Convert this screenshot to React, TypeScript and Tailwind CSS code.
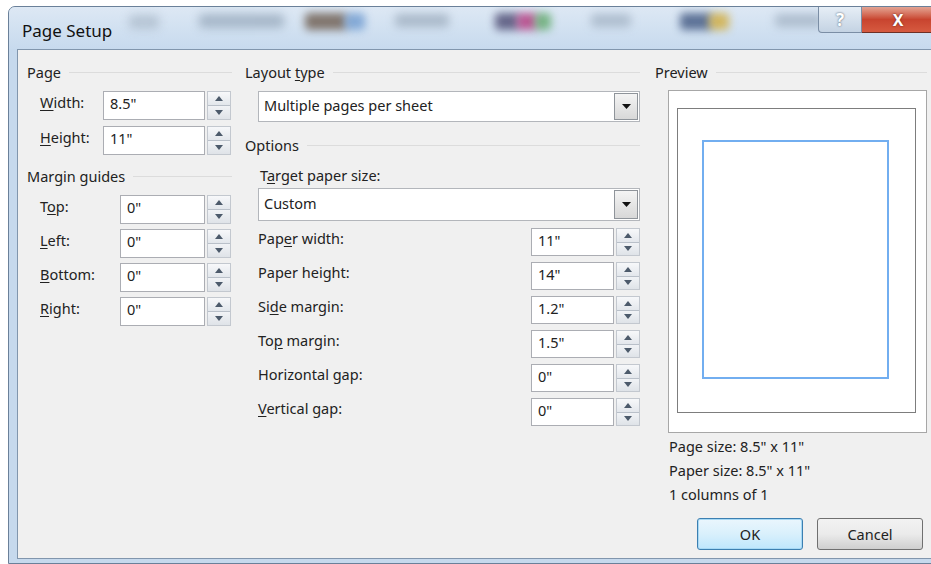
import React from "react";

const Spin = () => (
  <div className="ml-[2px] flex w-[24px] flex-col border border-[#c3c8cf] bg-[#eef0f3]">
    <div className="flex flex-1 items-center justify-center border-b border-[#b9c0c9] bg-gradient-to-b from-[#f7f8fa] to-[#e3e7ec]">
      <svg width="8" height="5" viewBox="0 0 8 5">
        <path d="M0 5 L4 0 L8 5 Z" fill="#4c5a6b" />
      </svg>
    </div>
    <div className="flex flex-1 items-center justify-center bg-gradient-to-b from-[#f1f3f6] to-[#dfe3e8]">
      <svg width="8" height="5" viewBox="0 0 8 5">
        <path d="M0 0 L8 0 L4 5 Z" fill="#4c5a6b" />
      </svg>
    </div>
  </div>
);

const NumberField = ({ value, width }: { value: string; width: string }) => (
  <div className="flex h-full">
    <div className={`${width} flex items-center border border-[#abadb3] bg-white pb-[4px] pl-[6px] text-[#222]`}>
      {value}
    </div>
    <Spin />
  </div>
);

const Select = ({ value, height }: { value: string; height: string }) => (
  <div className={`${height} ml-[13px] flex border border-[#b3b6bb] bg-white`}>
    <div className="flex flex-1 items-center pb-[2px] pl-[5px] text-[#222]">{value}</div>
    <div className="m-[1px] flex w-[24px] items-center justify-center border border-[#8f949a] bg-gradient-to-b from-[#f4f4f4] to-[#d8d8d8]">
      <svg width="9" height="5" viewBox="0 0 9 5">
        <path d="M0 0 L9 0 L4.5 5 Z" fill="#111" />
      </svg>
    </div>
  </div>
);

const GroupHeader = ({ children }: { children: React.ReactNode }) => (
  <div className="flex h-[20px] items-center">
    <span className="text-[#222]">{children}</span>
    <div className="ml-[8px] h-px flex-1 bg-[#dcdcdc]" />
  </div>
);

const Row = ({
  label,
  value,
  labelWidth,
  inputWidth,
  className = "",
}: {
  label: React.ReactNode;
  value: string;
  labelWidth: string;
  inputWidth: string;
  className?: string;
}) => (
  <div className={`flex h-[29px] items-center ${className}`}>
    <div className={`${labelWidth} flex h-full items-center pb-[7px] pl-[13px] text-[#222]`}>
      <span>{label}</span>
    </div>
    <NumberField value={value} width={inputWidth} />
  </div>
);

const OptionRow = ({ label, value }: { label: React.ReactNode; value: string }) => (
  <div className="flex h-[28px] items-center">
    <div className="flex h-full flex-1 items-center pb-[7px] pl-[13px] text-[#222]">
      <span>{label}</span>
    </div>
    <NumberField value={value} width="w-[83px]" />
  </div>
);

const u = (c: string) => <u className="underline-offset-2">{c}</u>;

export default function App() {
  return (
    <div className="h-[564px] w-[931px] overflow-hidden bg-white font-['Noto_Sans',sans-serif] text-[14.5px] leading-none">
      <div className="ml-[8px] mt-[6px] flex h-[558px] w-[940px] flex-col rounded-tl-[7px] border border-[#6a8099] bg-[#c6d9ed]">
        {/* title bar with the blurred desktop showing through */}
        <div className="relative flex h-[42px] items-start overflow-hidden rounded-tl-[6px] bg-gradient-to-b from-[#dde8f4] to-[#c7daee]">
          <div className="absolute left-[120px] top-[8px] h-[14px] w-[30px] rounded bg-[#a9b8c8] opacity-70 blur-[5px]" />
          <div className="absolute left-[190px] top-[7px] h-[14px] w-[85px] rounded bg-[#93a5b8] opacity-70 blur-[5px]" />
          <div className="absolute left-[296px] top-[6px] h-[17px] w-[42px] rounded bg-[#6c5a4c] opacity-80 blur-[4px]" />
          <div className="absolute left-[336px] top-[6px] h-[17px] w-[20px] rounded bg-[#6f9bd0] opacity-80 blur-[4px]" />
          <div className="absolute left-[386px] top-[7px] h-[13px] w-[54px] rounded bg-[#97a7b8] opacity-70 blur-[5px]" />
          <div className="absolute left-[486px] top-[6px] h-[17px] w-[24px] rounded bg-[#4a4870] opacity-80 blur-[4px]" />
          <div className="absolute left-[508px] top-[6px] h-[17px] w-[20px] rounded bg-[#b4347c] opacity-80 blur-[4px]" />
          <div className="absolute left-[526px] top-[6px] h-[17px] w-[16px] rounded bg-[#5ea868] opacity-80 blur-[4px]" />
          <div className="absolute left-[582px] top-[7px] h-[13px] w-[40px] rounded bg-[#9dadbf] opacity-70 blur-[5px]" />
          <div className="absolute left-[671px] top-[6px] h-[17px] w-[32px] rounded bg-[#3f5680] opacity-80 blur-[4px]" />
          <div className="absolute left-[700px] top-[6px] h-[17px] w-[20px] rounded bg-[#d2ac3c] opacity-80 blur-[4px]" />
          <div className="absolute left-[766px] top-[7px] h-[13px] w-[48px] rounded bg-[#9dadbf] opacity-70 blur-[5px]" />

          <div className="relative pl-[13px] pt-[15px] text-[17px] text-[#111]">Page Setup</div>
          <div className="flex-1" />
          <div className="relative mr-[12px] flex h-[26px]">
            <div className="flex w-[44px] items-center justify-center rounded-bl-[4px] border border-t-0 border-[#7b8ea5] bg-gradient-to-b from-[#e6eef6] to-[#c4d3e3] text-[17px] font-bold text-white [text-shadow:0_0_2px_#3c4c60]">
              ?
            </div>
            <div className="flex w-[73px] items-center justify-center rounded-br-[4px] border border-l-0 border-t-0 border-[#6e3026] bg-gradient-to-b from-[#e2a393] via-[#c8442f] to-[#d65a40] text-[16px] font-bold text-white [text-shadow:0_0_2px_#5a1a10]">
              X
            </div>
          </div>
        </div>

        <div className="flex flex-1 pb-[4px] pl-[8px] pr-[8px]">
          <div className="flex flex-1 border border-[#8196ad] bg-[#f0f0f0] pl-[9px] pt-[12px]">
            {/* page size and margin guides */}
            <div className="flex w-[205px] flex-col">
              <GroupHeader>Page</GroupHeader>
              <Row className="mt-[9px] h-[28px]" label={<>{u("W")}idth:</>} value={'8.5"'} labelWidth="w-[76px]" inputWidth="w-[102px]" />
              <Row className="mt-[6px] h-[28px]" label={<>{u("H")}eight:</>} value={'11"'} labelWidth="w-[76px]" inputWidth="w-[102px]" />
              <div className="mt-[11px]">
                <GroupHeader>Margin guides</GroupHeader>
              </div>
              <div className="mt-[9px] flex flex-col gap-[5px]">
                <Row label={<>T{u("o")}p:</>} value={'0"'} labelWidth="w-[93px]" inputWidth="w-[85px]" />
                <Row label={<>{u("L")}eft:</>} value={'0"'} labelWidth="w-[93px]" inputWidth="w-[85px]" />
                <Row label={<>{u("B")}ottom:</>} value={'0"'} labelWidth="w-[93px]" inputWidth="w-[85px]" />
                <Row label={<>{u("R")}ight:</>} value={'0"'} labelWidth="w-[93px]" inputWidth="w-[85px]" />
              </div>
            </div>

            {/* layout options */}
            <div className="ml-[13px] flex w-[395px] flex-col">
              <GroupHeader>
                Layout {u("t")}ype
              </GroupHeader>
              <div className="mt-[9px]">
                <Select value="Multiple pages per sheet" height="h-[31px]" />
              </div>
              <div className="mt-[13px]">
                <GroupHeader>Options</GroupHeader>
              </div>
              <div className="mt-[10px] flex h-[20px] items-center pl-[15px] text-[#222]">
                <span>
                  T{u("a")}rget paper size:
                </span>
              </div>
              <div className="mt-[3px]">
                <Select value="Custom" height="h-[33px]" />
              </div>
              <div className="mt-[7px] flex flex-col gap-[6px]">
                <OptionRow label={<>Pap{u("e")}r width:</>} value={'11"'} />
                <OptionRow label="Paper height:" value={'14"'} />
                <OptionRow label={<>Si{u("d")}e margin:</>} value={'1.2"'} />
                <OptionRow label={<>To{u("p")} margin:</>} value={'1.5"'} />
                <OptionRow label="Horizontal gap:" value={'0"'} />
                <OptionRow label={<>{u("V")}ertical gap:</>} value={'0"'} />
              </div>
            </div>

            {/* preview */}
            <div className="ml-[15px] flex w-[272px] flex-col">
              <GroupHeader>Preview</GroupHeader>
              <div className="ml-[13px] mt-[8px] h-[343px] w-[259px] border border-[#a7a7a7] bg-white pl-[8px] pt-[17px]">
                <div className="h-[305px] w-[239px] border border-[#7d7d7d] pl-[24px] pt-[31px]">
                  <div className="h-[239px] w-[187px] border-2 border-[#72aef0]" />
                </div>
              </div>
              <div className="ml-[14px] mt-[1px] flex flex-col text-[#222]">
                <div className="flex h-[24px] items-center">Page size: 8.5" x 11"</div>
                <div className="flex h-[24px] items-center">Paper size: 8.5" x 11"</div>
                <div className="flex h-[24px] items-center">1 columns of 1</div>
              </div>
              <div className="mt-[12px] flex justify-end gap-[14px] pr-[4px]">
                <button className="h-[32px] w-[106px] rounded-[3px] border border-[#3c7fb1] bg-gradient-to-b from-[#eaf6fd] via-[#d9f0fc] to-[#bee6fd] text-[#222] shadow-[inset_0_0_0_1px_#a7d9f5]">
                  OK
                </button>
                <button className="h-[32px] w-[106px] rounded-[3px] border border-[#707070] bg-gradient-to-b from-[#f2f2f2] via-[#ebebeb] to-[#cfcfcf] text-[#222]">
                  Cancel
                </button>
              </div>
            </div>
          </div>
        </div>
      </div>
    </div>
  );
}
